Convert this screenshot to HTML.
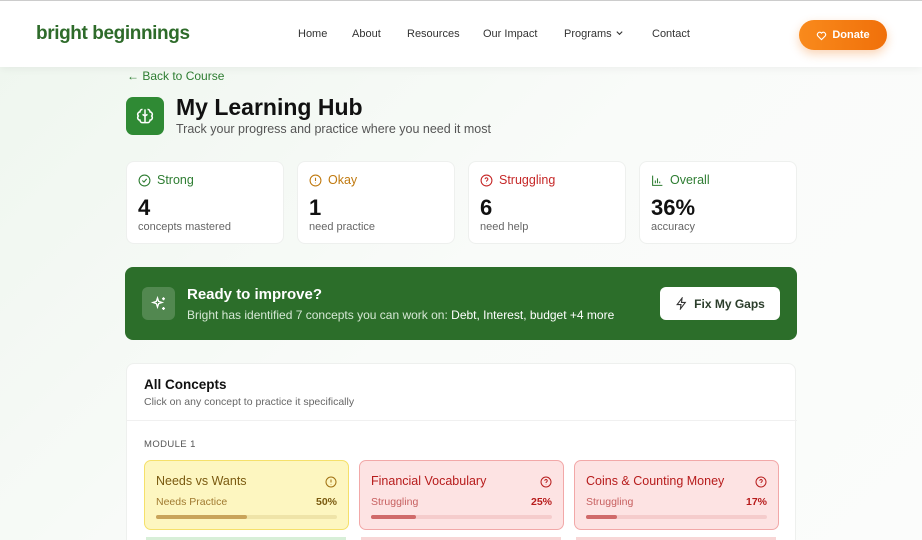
<!DOCTYPE html><html style="height:540px;overflow:hidden"><head><style>
*{box-sizing:border-box;margin:0;padding:0}
body{width:922px;height:540px;overflow:hidden;font-family:"Liberation Sans",sans-serif;background:linear-gradient(135deg,#eef6ee,#f9fbf9 50%,#fbfcfb);position:relative;color:#1a1a1a}
.abs{position:absolute}
nav{position:absolute;left:0;top:0;width:922px;height:67px;background:#fff;border-top:1px solid #ccc;box-shadow:0 2px 8px rgba(0,0,0,.05)}
.logo{left:36px;top:22px;font-size:19px;font-weight:bold;color:#2e6b2a;letter-spacing:-.4px}
.nl{top:27px;font-size:11px;color:#333}
.don{left:799px;top:19px;width:88px;height:30px;border-radius:15px;background:linear-gradient(90deg,#f98a1c,#f0700a);color:#fff;font-size:11px;font-weight:bold;display:flex;align-items:center;justify-content:center;gap:5px;box-shadow:0 4px 10px rgba(240,112,10,.3)}
.card{background:#fff;border:1px solid #eef0ee;border-radius:8px}
.st{top:161px;width:158px;height:83px}
.st .l{position:absolute;left:11px;top:11px;font-size:12.5px;display:flex;align-items:center;gap:6px}
.st .n{position:absolute;left:11px;top:33px;font-size:22px;font-weight:bold;color:#111}
.st .s{position:absolute;left:11px;top:59px;font-size:11px;color:#666}
.tile{top:460px;width:205px;height:70px;border-radius:7px;border:1.5px solid}
.tile .t{position:absolute;left:11px;top:13px;font-size:12.5px}
.tile .q{position:absolute;right:11px;top:14px}
.tile .s{position:absolute;left:11px;top:35px;font-size:10.5px}
.tile .p{position:absolute;right:11px;top:35px;font-size:10.5px;font-weight:bold}
.tile .b{position:absolute;left:11px;right:11px;top:54px;height:4px;border-radius:2px}
.tile .b i{display:block;height:4px;border-radius:2px}
</style></head><body>
<nav>
<div class="abs logo">bright beginnings</div>
<div class="abs nl" style="left:298px">Home</div>
<div class="abs nl" style="left:352px">About</div>
<div class="abs nl" style="left:407px">Resources</div>
<div class="abs nl" style="left:483px">Our Impact</div>
<div class="abs nl" style="left:564px">Programs <svg width="9" height="9" viewBox="0 0 10 10"><path d="M2 4l3 3 3-3" fill="none" stroke="#333" stroke-width="1.2"/></svg></div>
<div class="abs nl" style="left:652px">Contact</div>
<div class="abs don"><svg width="11" height="11" viewBox="0 0 24 24"><path d="M12 21l-8-8a5 5 0 017-7l1 1 1-1a5 5 0 017 7z" fill="none" stroke="#fff" stroke-width="2.4"/></svg>Donate</div>
</nav>
<div class="abs" style="left:127px;top:69px;font-size:12px;color:#2e7d32">← Back to Course</div>
<div class="abs" style="left:126px;top:97px;width:38px;height:38px;border-radius:7px;background:#2f8a34;display:flex;align-items:center;justify-content:center"><svg width="20" height="20" viewBox="0 0 24 24" fill="none" stroke="#fff" stroke-width="1.8"><path d="M12 4v16M9 4a3 3 0 00-3 3 3 3 0 00-2 5 3 3 0 002 5 3 3 0 003 3h3M15 4a3 3 0 013 3 3 3 0 012 5 3 3 0 01-2 5 3 3 0 01-3 3h-3M9 10l3 2 3-2"/></svg></div>
<div class="abs" style="left:176px;top:94px;font-size:23px;font-weight:bold;color:#111">My Learning Hub</div>
<div class="abs" style="left:176px;top:122px;font-size:12.5px;color:#555">Track your progress and practice where you need it most</div>

<div class="abs card st" style="left:126px"><div class="l" style="color:#2e7d32"><svg width="13" height="13" viewBox="0 0 24 24" fill="none" stroke="#2e7d32" stroke-width="2"><circle cx="12" cy="12" r="10"/><path d="M8 12l3 3 5-6"/></svg>Strong</div><div class="n">4</div><div class="s">concepts mastered</div></div>
<div class="abs card st" style="left:297px"><div class="l" style="color:#c07a10"><svg width="13" height="13" viewBox="0 0 24 24" fill="none" stroke="#c07a10" stroke-width="2"><circle cx="12" cy="12" r="10"/><path d="M12 7v6M12 16v1"/></svg>Okay</div><div class="n">1</div><div class="s">need practice</div></div>
<div class="abs card st" style="left:468px"><div class="l" style="color:#c62828"><svg width="13" height="13" viewBox="0 0 24 24" fill="none" stroke="#c62828" stroke-width="2"><circle cx="12" cy="12" r="10"/><path d="M9.5 9.5a2.5 2.5 0 114 2c-1 .7-1.5 1.2-1.5 2.5M12 17v.5"/></svg>Struggling</div><div class="n">6</div><div class="s">need help</div></div>
<div class="abs card st" style="left:639px"><div class="l" style="color:#2e7d32"><svg width="13" height="13" viewBox="0 0 24 24" fill="none" stroke="#2e7d32" stroke-width="2"><path d="M3 3v18h18M8 17v-5M12 17V8M16 17v-3"/></svg>Overall</div><div class="n">36%</div><div class="s">accuracy</div></div>

<div class="abs" style="left:125px;top:267px;width:672px;height:73px;border-radius:8px;background:#2c6e2a">
<div class="abs" style="left:17px;top:20px;width:33px;height:33px;border-radius:6px;background:rgba(255,255,255,.18);display:flex;align-items:center;justify-content:center"><svg width="18" height="18" viewBox="0 0 24 24" fill="none" stroke="#fff" stroke-width="1.8"><path d="M10 4l1.5 4.5L16 10l-4.5 1.5L10 16l-1.5-4.5L4 10l4.5-1.5zM18 3v4M16 5h4M18 16v4M16 18h4"/></svg></div>
<div class="abs" style="left:62px;top:19px;font-size:15px;font-weight:bold;color:#fff">Ready to improve?</div>
<div class="abs" style="left:62px;top:41px;font-size:12px;color:#d6e8d5">Bright has identified 7 concepts you can work on: <span style="color:#fff">Debt, Interest, budget +4 more</span></div>
<div class="abs" style="left:535px;top:20px;width:120px;height:33px;border-radius:6px;background:#fff;color:#2c3e2c;font-size:12px;font-weight:bold;display:flex;align-items:center;justify-content:center;gap:6px"><svg width="13" height="13" viewBox="0 0 24 24" fill="none" stroke="#333" stroke-width="2"><path d="M13 2L4 14h7l-1 8 9-12h-7z"/></svg>Fix My Gaps</div>
</div>

<div class="abs card" style="left:126px;top:363px;width:670px;height:190px">
<div class="abs" style="left:17px;top:13px;font-size:13.5px;font-weight:bold;color:#111">All Concepts</div>
<div class="abs" style="left:17px;top:32px;font-size:10.5px;color:#666">Click on any concept to practice it specifically</div>
<div class="abs" style="left:0;top:56px;width:670px;border-top:1px solid #f0f0f0"></div>
<div class="abs" style="left:17px;top:75px;font-size:9.5px;color:#555;letter-spacing:.4px">MODULE 1</div>
</div>
<div class="abs tile" style="left:144px;background:#fdf6c0;border-color:#f5e06a"><div class="t" style="color:#7a5a10">Needs vs Wants</div><div class="q"><svg width="12" height="12" viewBox="0 0 24 24" fill="none" stroke="#a07010" stroke-width="2"><circle cx="12" cy="12" r="10"/><path d="M12 7v6M12 16v1"/></svg></div><div class="s" style="color:#a07a30">Needs Practice</div><div class="p" style="color:#7a5a10">50%</div><div class="b" style="background:#efe4a8"><i style="width:50%;background:#c9a45a"></i></div></div>
<div class="abs tile" style="left:359px;background:#fde3e3;border-color:#f2a8a8"><div class="t" style="color:#b71c1c">Financial Vocabulary</div><div class="q"><svg width="12" height="12" viewBox="0 0 24 24" fill="none" stroke="#b71c1c" stroke-width="2"><circle cx="12" cy="12" r="10"/><path d="M9.5 9.5a2.5 2.5 0 114 2c-1 .7-1.5 1.2-1.5 2.5M12 17v.5"/></svg></div><div class="s" style="color:#c76060">Struggling</div><div class="p" style="color:#b71c1c">25%</div><div class="b" style="background:#f5cccc"><i style="width:25%;background:#d06a6a"></i></div></div>
<div class="abs tile" style="left:574px;background:#fde3e3;border-color:#f2a8a8"><div class="t" style="color:#b71c1c">Coins &amp; Counting Money</div><div class="q"><svg width="12" height="12" viewBox="0 0 24 24" fill="none" stroke="#b71c1c" stroke-width="2"><circle cx="12" cy="12" r="10"/><path d="M9.5 9.5a2.5 2.5 0 114 2c-1 .7-1.5 1.2-1.5 2.5M12 17v.5"/></svg></div><div class="s" style="color:#c76060">Struggling</div><div class="p" style="color:#b71c1c">17%</div><div class="b" style="background:#f5cccc"><i style="width:17%;background:#d06a6a"></i></div></div>
<div class="abs" style="left:146px;top:537px;width:200px;height:3px;background:#d8efd8"></div>
<div class="abs" style="left:361px;top:537px;width:200px;height:3px;background:#f8d6d6"></div>
<div class="abs" style="left:576px;top:537px;width:200px;height:3px;background:#f8d6d6"></div>
</body></html>
